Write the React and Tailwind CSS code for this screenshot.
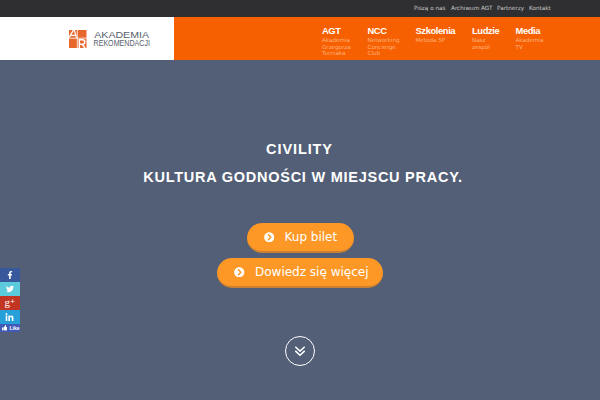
import React from 'react';
import { FaFacebookF, FaTwitter, FaLinkedinIn, FaThumbsUp, FaChevronCircleRight } from 'react-icons/fa';

const topLinks = [
  { name: 'Piszą o nas', width: 'w-[37px]' },
  { name: 'Archiwum AGT', width: 'w-[46px]' },
  { name: 'Partnerzy', width: 'w-[32px]' },
  { name: 'Kontakt', width: 'w-[22px]' },
];

const menu = [
  { title: 'AGT', lines: ['Akademia', 'Grzegorza', 'Turniaka'], width: 'w-[45.5px]' },
  { title: 'NCC', lines: ['Networking', 'Concierge', 'Club'], width: 'w-[48px]' },
  { title: 'Szkolenia', lines: ['Metoda 5P'], width: 'w-[56.5px]' },
  { title: 'Ludzie', lines: ['Nasz', 'zespół'], width: 'w-[43.5px]' },
  { title: 'Media', lines: ['Akademia', 'TV'], width: 'w-[34.5px]' },
];

const Logo = () => (
  <svg className="ml-[68px] mt-[12px] h-[24px] w-[90px] overflow-visible" viewBox="0 0 90 24">
    <rect x="1" y="1" width="17.5" height="18" fill="#e8672c" />
    <path d="M0 9.2H19M9.3 0V20" stroke="#fff" strokeWidth="0.8" />
    <path d="M1.2 8.4L5.2 1.4H6.4L8.6 9M3 6.4H7.6" fill="none" stroke="#fff" strokeWidth="1.2" />
    <path d="M11.3 19V10.8H14.6A2.2 2.2 0 0 1 14.6 15.2H11.3M14.2 15.2L17 19" fill="none" stroke="#fff" strokeWidth="1.5" />
    <text x="26.3" y="8.8" fontSize="9" fill="#56606d" fontFamily="Liberation Sans, sans-serif" textLength="54.7" lengthAdjust="spacingAndGlyphs">AKADEMIA</text>
    <text x="25.5" y="17.4" fontSize="9.8" fill="#56606d" fontFamily="Liberation Sans, sans-serif" textLength="56.5" lengthAdjust="spacingAndGlyphs">REKOMENDACJI</text>
  </svg>
);

const Header = () => (
  <header>
    <nav className="flex h-[17px] bg-[#2f2f31] pl-[414px] text-[5.7px] leading-[17px] text-[#c9c9c9]">
      {topLinks.map((link) => (
        <a key={link.name} className={`${link.width} shrink-0 whitespace-nowrap`}>{link.name}</a>
      ))}
    </nav>
    <div className="flex h-[43px] bg-[#f76000]">
      <div className="w-[173.5px] shrink-0 bg-white">
        <Logo />
      </div>
      <nav className="flex pt-[8px] pl-[148.5px]">
        {menu.map((item) => (
          <div key={item.title} className={`${item.width} shrink-0`}>
            <h2 className="font-['Liberation_Sans',sans-serif] text-[9.4px] leading-[12px] font-bold tracking-[-0.4px] text-white">{item.title}</h2>
            {item.lines.map((line) => (
              <p key={line} className="text-[5.6px] leading-[6.5px] whitespace-nowrap text-[#ffb27e]">{line}</p>
            ))}
          </div>
        ))}
      </nav>
    </div>
  </header>
);

const Button = ({ label, className }) => (
  <button className={`${className} flex h-[30px] items-center rounded-full border-b-2 border-[#cc8132] bg-[#fd9827] pl-[17px] text-[12px] whitespace-nowrap text-white`}>
    <FaChevronCircleRight className="mr-[10.5px] size-[10.5px] shrink-0" />
    {label}
  </button>
);

const Social = () => (
  <aside className="absolute top-[268px] left-0 w-[19.5px] text-white">
    <div className="flex h-[14px] items-center justify-center bg-[#37589b]"><FaFacebookF className="size-[8px]" /></div>
    <div className="flex h-[14px] items-center justify-center bg-[#5bcbdc]"><FaTwitter className="size-[8px]" /></div>
    <div className="flex h-[14px] items-center justify-center bg-[#c23522]">
      <span className="mb-[3px] font-['Liberation_Serif',serif] text-[11px] leading-[10px]">g</span>
      <span className="mb-[4px] text-[6px] leading-[6px]">+</span>
    </div>
    <div className="flex h-[14px] items-center justify-center bg-[#279fd8]"><FaLinkedinIn className="size-[9px]" /></div>
    <div className="flex h-[8px] items-center gap-[2px] rounded-br-[2px] bg-[#4159b8] pl-[2px] font-['Liberation_Sans',sans-serif] text-[5px] leading-[8px] font-bold">
      <FaThumbsUp className="size-[5.5px]" />
      Like
    </div>
  </aside>
);

const App = () => {
  return (
    <div className="relative h-[400px] w-[600px] overflow-hidden bg-[#535f77] font-['DejaVu_Sans',sans-serif]">
      <Header />
      <main className="flex flex-col items-center">
        <h1 className="mt-[75px] ml-[6px] text-center font-['Liberation_Sans',sans-serif] text-[14.5px] leading-[28px] font-bold tracking-[0.75px] text-white">
          <span className="mr-[7px] block tracking-[0.9px]">CIVILITY</span>
          <span className="block whitespace-nowrap">KULTURA GODNOŚCI W MIEJSCU PRACY.</span>
        </h1>
        <div className="mt-[32px] flex flex-col items-center gap-[5px]">
          <Button label="Kup bilet" className="w-[107px]" />
          <Button label="Dowiedz się więcej" className="w-[166px]" />
        </div>
        <a className="mt-[48px] flex size-[30px] items-center justify-center rounded-full border border-white text-white">
          <svg className="size-[12px]" viewBox="0 0 12 12" fill="none" stroke="currentColor" strokeWidth="1.5">
            <path d="M1.3 1.7L6 6.1L10.7 1.7M1.3 5.9L6 10.3L10.7 5.9" />
          </svg>
        </a>
      </main>
      <Social />
    </div>
  );
};

export default App;
